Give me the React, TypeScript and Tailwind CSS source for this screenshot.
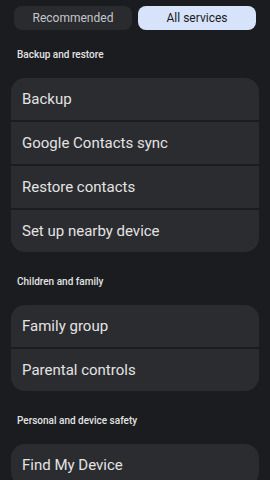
import React from 'react';

const sections = [
  {
    title: 'Backup and restore',
    items: ['Backup', 'Google Contacts sync', 'Restore contacts', 'Set up nearby device'],
  },
  {
    title: 'Children and family',
    items: ['Family group', 'Parental controls'],
  },
  {
    title: 'Personal and device safety',
    items: ['Find My Device'],
  },
];

export default function App() {
  return (
    <div
      className="w-[270px] h-[480px] overflow-hidden bg-[#1b1c20] text-[#e3e3e3]"
      style={{ fontFamily: 'Roboto, "Open Sans", sans-serif' }}
    >
      {/* Tabs */}
      <div className="flex gap-[6px] px-[14px] pt-[6px]">
        <button className="flex-1 h-[24px] rounded-[8px] bg-[#2a2b2f] text-[12px] text-[#c5c6c9]">
          Recommended
        </button>
        <button className="flex-1 h-[24px] rounded-[8px] bg-[#d6e3fa] text-[12px] text-[#1b1c20]">
          All services
        </button>
      </div>

      {sections.map((section, i) => (
        <div key={section.title}>
          <div
            className={
              (i === 0 ? 'pt-[18px] ' : 'pt-[23px] ') +
              'px-[17px] pb-[16px] text-[10px] font-medium leading-[14px] text-[#e3e3e3]'
            }
          >
            {section.title}
          </div>
          <div className="mx-[11px] rounded-[14px] overflow-hidden flex flex-col gap-[2px] bg-[#1b1c20]">
            {section.items.map((item) => (
              <div
                key={item}
                className="h-[42px] flex items-center px-[11px] bg-[#2b2c30] text-[15px] text-[#e3e3e3]"
              >
                {item}
              </div>
            ))}
          </div>
        </div>
      ))}
    </div>
  );
}
